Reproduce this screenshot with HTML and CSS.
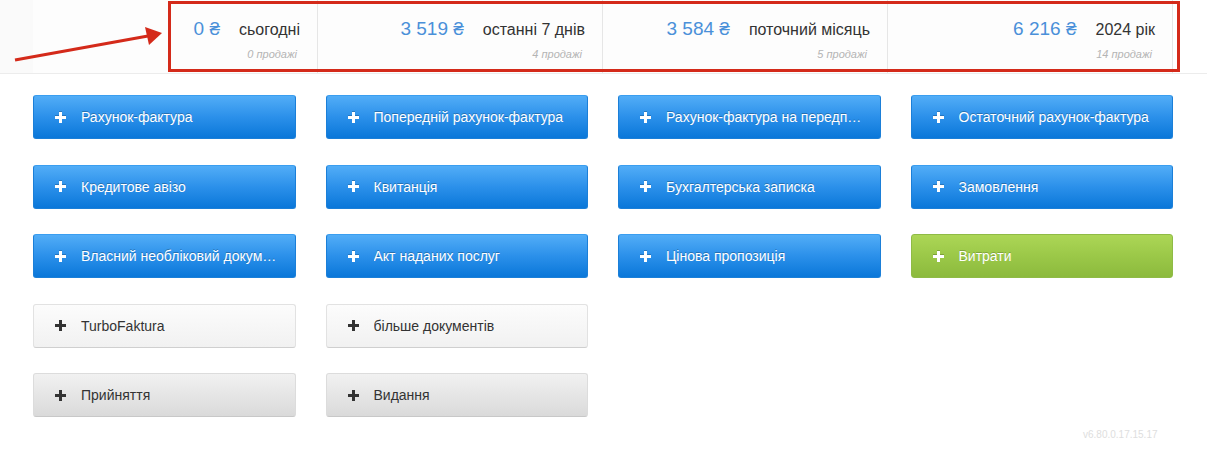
FILE: index.html
```html
<!DOCTYPE html>
<html lang="uk">
<head>
<meta charset="utf-8">
<title>Dashboard</title>
<link rel="stylesheet" href="styles.css">
</head>
<body>
<div class="page">
  <header class="stats">
    <div class="stat">
      <div class="stat-main"><span class="amount">0 ₴</span><span class="label">сьогодні</span></div>
      <div class="sub">0 продажі</div>
    </div>
    <div class="stat">
      <div class="stat-main"><span class="amount">3 519 ₴</span><span class="label">останні 7 днів</span></div>
      <div class="sub">4 продажі</div>
    </div>
    <div class="stat">
      <div class="stat-main"><span class="amount">3 584 ₴</span><span class="label">поточний місяць</span></div>
      <div class="sub">5 продажі</div>
    </div>
    <div class="stat">
      <div class="stat-main"><span class="amount">6 216 ₴</span><span class="label">2024 рік</span></div>
      <div class="sub">14 продажі</div>
    </div>
  </header>

  <div class="highlight"></div>
  <svg class="arrow" width="170" height="70" viewBox="0 0 170 70">
    <line x1="15" y1="60" x2="148" y2="36" stroke="#d42a1a" stroke-width="3"/>
    <polygon points="162,33 145,27 149,45" fill="#d42a1a"/>
  </svg>

  <main class="buttons">
    <a class="btn blue"><svg class="plus" viewBox="0 0 11 11"><path d="M4 0h3v4h4v3H7v4H4V7H0V4h4z"/></svg><span class="txt">Рахунок-фактура</span></a>
    <a class="btn blue"><svg class="plus" viewBox="0 0 11 11"><path d="M4 0h3v4h4v3H7v4H4V7H0V4h4z"/></svg><span class="txt">Попередній рахунок-фактура</span></a>
    <a class="btn blue"><svg class="plus" viewBox="0 0 11 11"><path d="M4 0h3v4h4v3H7v4H4V7H0V4h4z"/></svg><span class="txt">Рахунок-фактура на передплату</span></a>
    <a class="btn blue"><svg class="plus" viewBox="0 0 11 11"><path d="M4 0h3v4h4v3H7v4H4V7H0V4h4z"/></svg><span class="txt">Остаточний рахунок-фактура</span></a>

    <a class="btn blue"><svg class="plus" viewBox="0 0 11 11"><path d="M4 0h3v4h4v3H7v4H4V7H0V4h4z"/></svg><span class="txt">Кредитове авізо</span></a>
    <a class="btn blue"><svg class="plus" viewBox="0 0 11 11"><path d="M4 0h3v4h4v3H7v4H4V7H0V4h4z"/></svg><span class="txt">Квитанція</span></a>
    <a class="btn blue"><svg class="plus" viewBox="0 0 11 11"><path d="M4 0h3v4h4v3H7v4H4V7H0V4h4z"/></svg><span class="txt">Бухгалтерська записка</span></a>
    <a class="btn blue"><svg class="plus" viewBox="0 0 11 11"><path d="M4 0h3v4h4v3H7v4H4V7H0V4h4z"/></svg><span class="txt">Замовлення</span></a>

    <a class="btn blue"><svg class="plus" viewBox="0 0 11 11"><path d="M4 0h3v4h4v3H7v4H4V7H0V4h4z"/></svg><span class="txt">Власний необліковий документ</span></a>
    <a class="btn blue"><svg class="plus" viewBox="0 0 11 11"><path d="M4 0h3v4h4v3H7v4H4V7H0V4h4z"/></svg><span class="txt">Акт наданих послуг</span></a>
    <a class="btn blue"><svg class="plus" viewBox="0 0 11 11"><path d="M4 0h3v4h4v3H7v4H4V7H0V4h4z"/></svg><span class="txt">Цінова пропозиція</span></a>
    <a class="btn green"><svg class="plus" viewBox="0 0 11 11"><path d="M4 0h3v4h4v3H7v4H4V7H0V4h4z"/></svg><span class="txt">Витрати</span></a>

    <a class="btn light"><svg class="plus" viewBox="0 0 11 11"><path d="M4 0h3v4h4v3H7v4H4V7H0V4h4z"/></svg><span class="txt">TurboFaktura</span></a>
    <a class="btn light"><svg class="plus" viewBox="0 0 11 11"><path d="M4 0h3v4h4v3H7v4H4V7H0V4h4z"/></svg><span class="txt">більше документів</span></a>
    <span class="empty"></span>
    <span class="empty"></span>

    <a class="btn gray"><svg class="plus" viewBox="0 0 11 11"><path d="M4 0h3v4h4v3H7v4H4V7H0V4h4z"/></svg><span class="txt">Прийняття</span></a>
    <a class="btn gray"><svg class="plus" viewBox="0 0 11 11"><path d="M4 0h3v4h4v3H7v4H4V7H0V4h4z"/></svg><span class="txt">Видання</span></a>
  </main>

  <footer class="version">v6.80.0.17.15.17</footer>
</div>
</body>
</html>
```

FILE: styles.css
```css
* { box-sizing: border-box; }
html, body {
  margin: 0;
  padding: 0;
  background: #ffffff;
  font-family: "Liberation Sans", Arial, sans-serif;
}
.page {
  position: relative;
  width: 1207px;
  height: 453px;
  overflow: hidden;
}
.stats {
  display: grid;
  grid-template-columns: repeat(4, 285px);
  height: 74px;
  padding-left: 33px;
  background: linear-gradient(to right, #fafafa 0, #fafafa 33px, #fdfdfd 33px, #fdfdfd 1173px, #ffffff 1173px);
  border-bottom: 1px solid #ececec;
}
.stat {
  border-right: 1px solid #e6e6e6;
  padding: 18px 17px 0 0;
  display: flex;
  flex-direction: column;
  align-items: flex-end;
}
.stat-main {
  display: flex;
  align-items: baseline;
  gap: 19px;
  height: 25px;
}
.amount {
  color: #4a90d9;
  font-size: 19px;
}
.label {
  color: #333333;
  font-size: 16px;
}
.sub {
  margin-top: 5px;
  padding-right: 3px;
  color: #b4b4b4;
  font-size: 11px;
  font-style: italic;
}
.highlight {
  position: absolute;
  left: 168px;
  top: 1px;
  width: 1012px;
  height: 71px;
  border: 3px solid #d42a1a;
}
.arrow {
  position: absolute;
  left: 0;
  top: 0;
}
.buttons {
  display: grid;
  grid-template-columns: repeat(4, 262.5px);
  grid-auto-rows: 44px;
  column-gap: 30px;
  row-gap: 25.5px;
  padding: 21px 0 0 33px;
}
.btn {
  display: flex;
  align-items: center;
  padding-left: 21px;
  border-radius: 3px;
  font-size: 14px;
  text-decoration: none;
  overflow: hidden;
  cursor: pointer;
}
.plus {
  width: 11px;
  height: 11px;
  flex: none;
  margin-right: 15px;
}
.txt {
  white-space: nowrap;
  overflow: hidden;
  text-overflow: ellipsis;
  padding-right: 12px;
}
.blue {
  background: linear-gradient(to bottom, #52adf7 0%, #2b90ea 50%, #0a77d9 100%);
  border: 1px solid #1b7fd8;
  border-top-color: #3a9ef0;
  color: #ffffff;
  text-shadow: 0 -1px 0 rgba(0, 0, 0, 0.25);
}
.blue .plus, .green .plus { fill: #ffffff; filter: drop-shadow(0 -1px 0 rgba(0,0,0,0.2)); }
.green {
  background: linear-gradient(to bottom, #acd656 0%, #9bc848 50%, #8cba3d 100%);
  border: 1px solid #8fbb46;
  color: #ffffff;
  text-shadow: 0 -1px 0 rgba(0, 0, 0, 0.2);
}
.light {
  background: linear-gradient(to bottom, #fcfcfc 0%, #f1f1f1 100%);
  border: 1px solid #e2e2e2;
  border-bottom-color: #cfcfcf;
  color: #333333;
}
.gray {
  background: linear-gradient(to bottom, #f1f1f1 0%, #dadada 100%);
  border: 1px solid #dcdcdc;
  border-bottom-color: #c8c8c8;
  color: #333333;
}
.light .plus, .gray .plus { fill: #333333; }
.version {
  position: absolute;
  left: 1083px;
  top: 429px;
  font-size: 10px;
  color: #dedede;
}
```
